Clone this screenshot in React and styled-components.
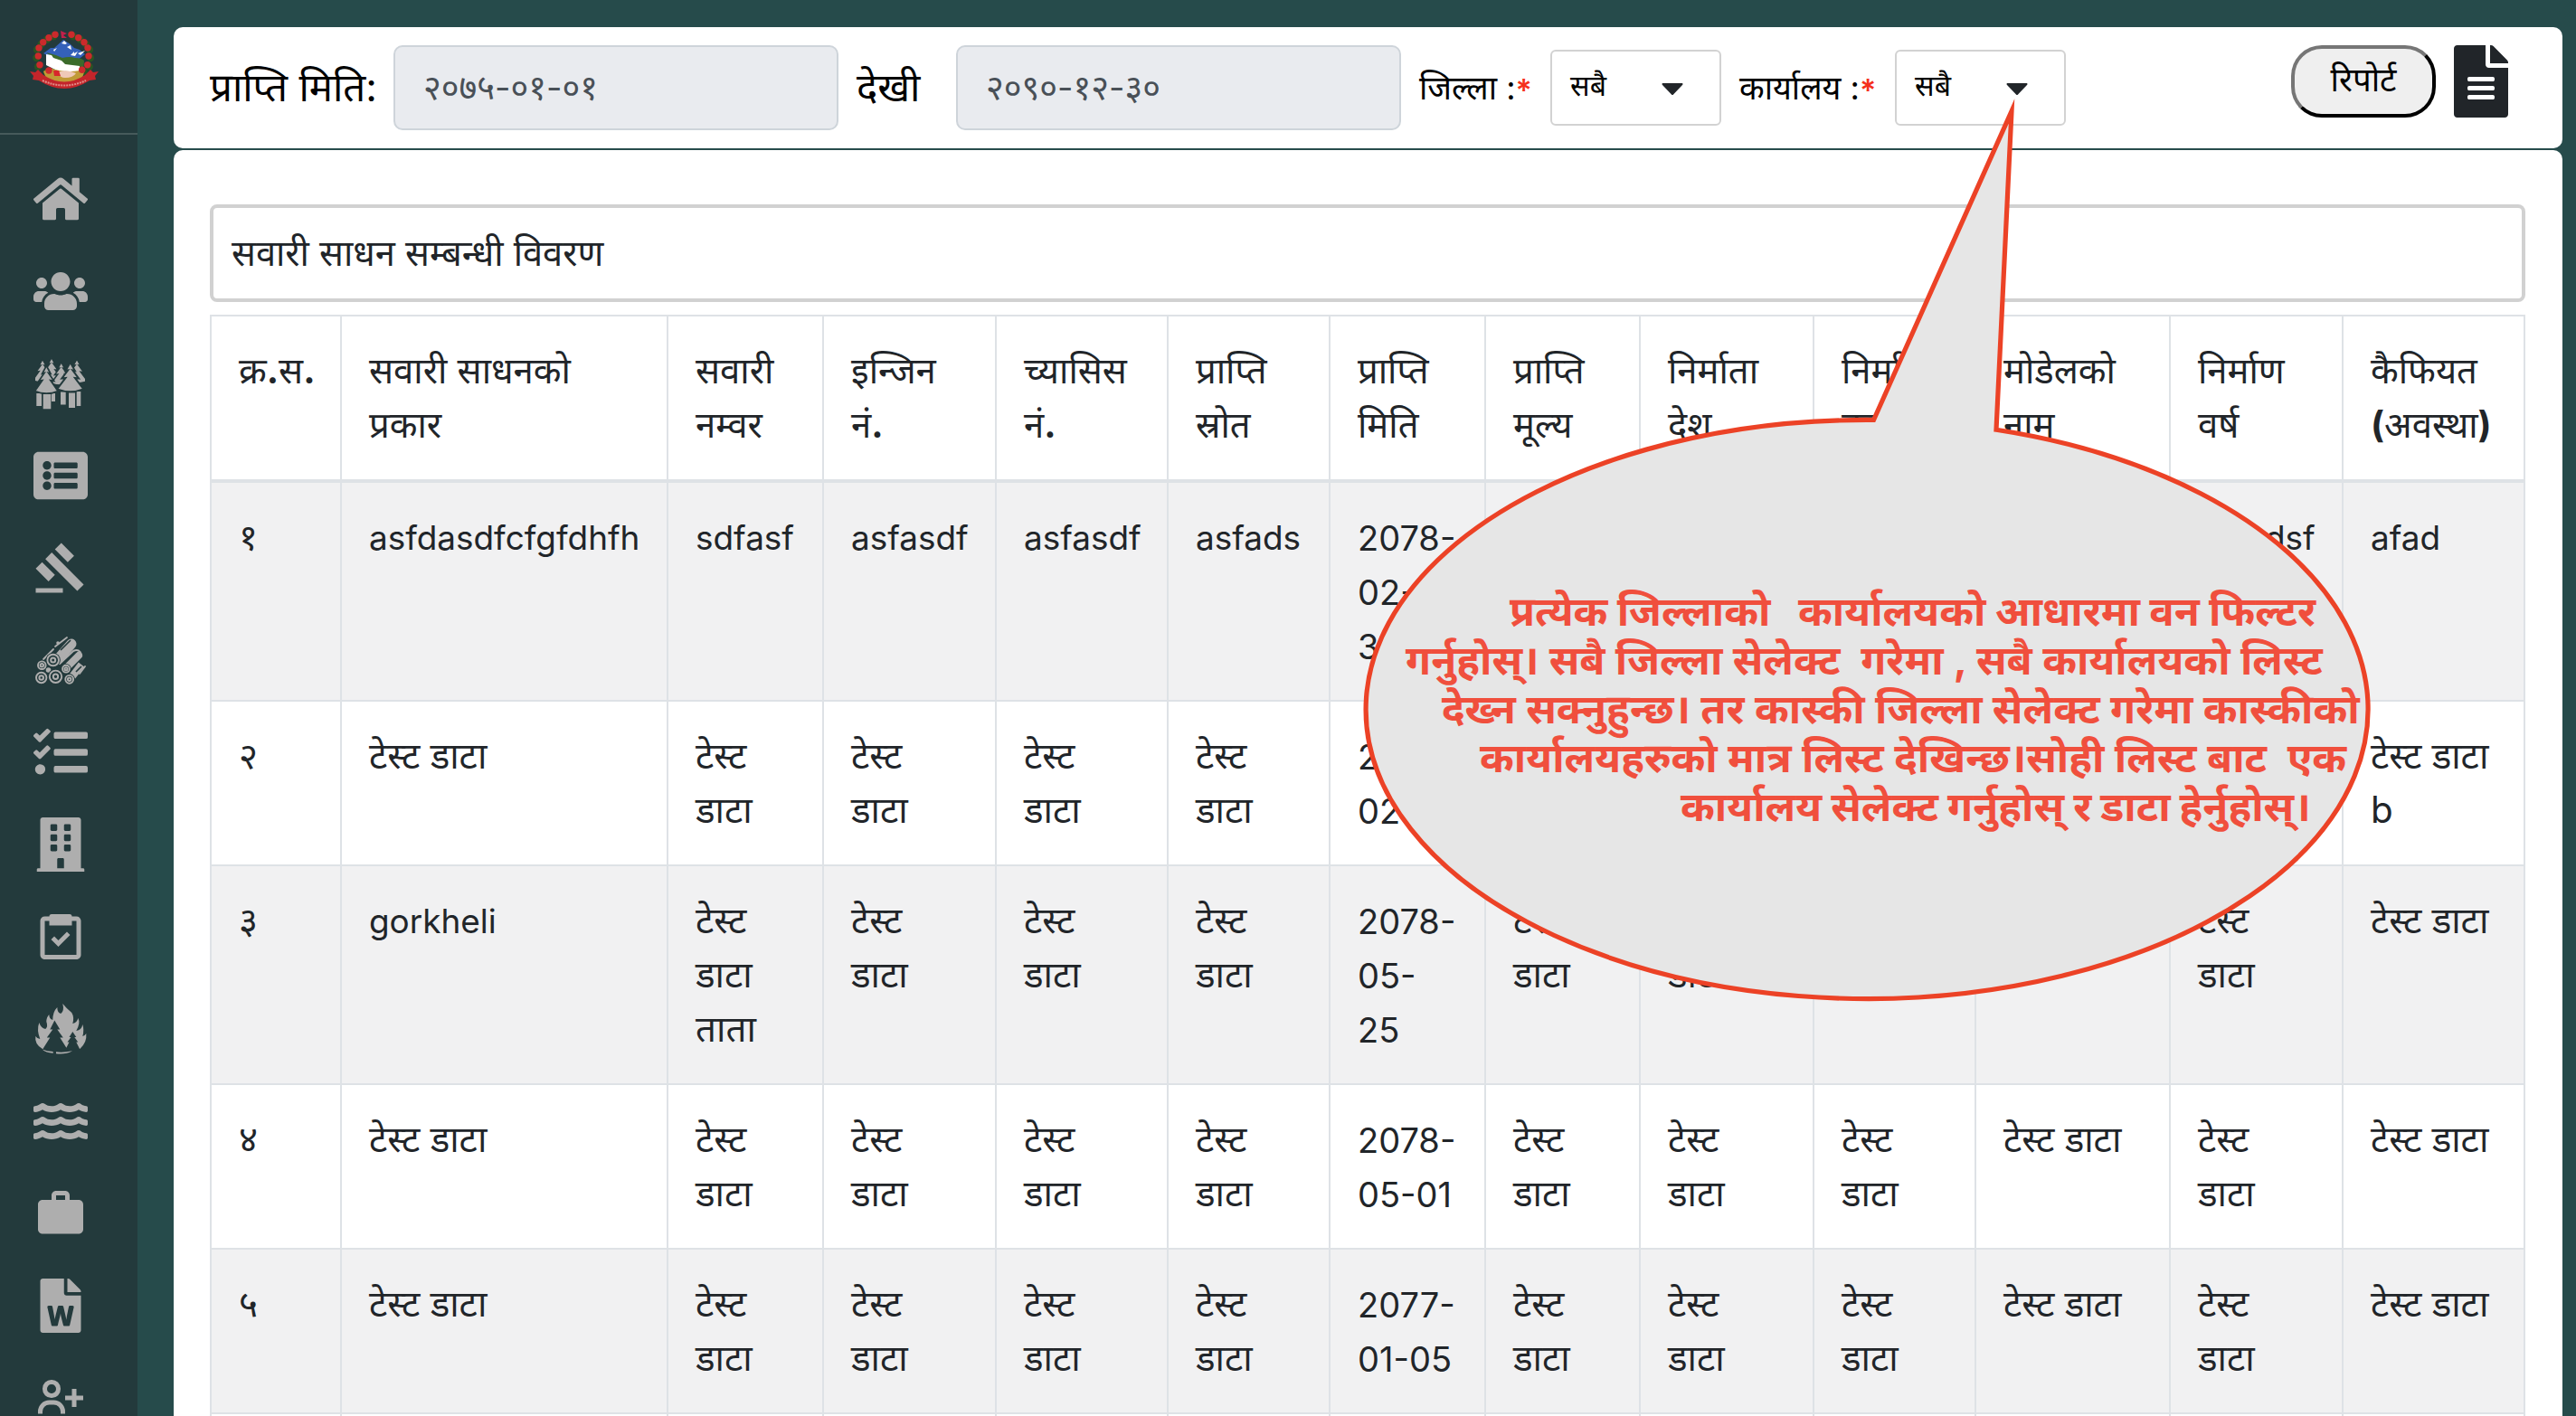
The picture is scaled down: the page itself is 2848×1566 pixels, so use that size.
import React from "react";
import styled, { createGlobalStyle } from "styled-components";
import { FaHome, FaUsers, FaListAlt, FaTasks, FaBuilding, FaWater, FaFileWord, FaFileAlt } from "react-icons/fa";
import { MdGavel } from "react-icons/md";
import { BiUserPlus } from "react-icons/bi";

const Global = createGlobalStyle`
  *{box-sizing:border-box}
  body{margin:0;background:#264b4b;overflow:hidden;font-family:Inter,"Noto Sans Devanagari","Noto Sans",sans-serif;color:#212529}
`;
const Page = styled.div`display:flex;height:1566px;width:2848px;overflow:hidden;position:relative;background:#264b4b;`;
const Sidebar = styled.nav`width:152px;height:100%;background:#233a3c;flex:none;overflow:hidden;`;
const Brand = styled.div`height:149px;border-bottom:2px solid #465a5b;padding:33px 0 0 33px;margin-bottom:20px;`;
const NavItem = styled.div`height:102px;padding-left:37px;display:flex;align-items:center;color:#aeaeae;svg{width:60px;height:60px;display:block}`;
const Main = styled.main`flex:1;padding:30px 16px 0 40px;display:flex;flex-direction:column;gap:2px;`;
const Toolbar = styled.header`height:134px;flex:none;background:#fff;border-radius:10px;padding:20px 60px 0 40px;display:flex;align-items:flex-start;`;
const Cell = styled.div`width:${p => p.$w}px;height:94px;padding-left:${p => p.$pad || 0}px;padding-top:5px;flex:none;display:flex;align-items:center;white-space:pre;color:#000;font-size:${p => p.$size}px;`;
const Star = styled.span`color:#f5301c;font-weight:600;font-size:34px;`;
const DateBox = styled.div`width:492px;height:94px;flex:none;border:2px solid #ced4da;border-radius:10px;background:#e9ebef;color:#495057;padding:4px 0 0 31px;display:flex;align-items:center;font-size:38px;`;
const Select = styled.div`width:189px;height:84px;margin-top:5px;flex:none;border:2px solid #d2d2d2;border-radius:6px;padding:0 40px 0 20px;display:flex;align-items:center;justify-content:space-between;color:#000;font-size:32px;svg{width:24px;height:13px;display:block;margin-top:2px}`;
const Actions = styled.div`margin-left:auto;display:flex;gap:20px;color:#212529;svg{width:60px;height:80px;display:block}`;
const Report = styled.button`width:160px;height:80px;padding:2px 0 0;border:4px outset #000;border-color:#767676 #212121 #212121 #767676;border-radius:34px;background:#efefef;color:#000;font:inherit;font-size:36.5px;`;
const Panel = styled.section`flex:1;min-height:0;overflow:hidden;background:#fff;border-radius:10px 10px 0 0;padding:60px 41px 0 40px;`;
const Title = styled.div`height:108px;border:4px solid #d1d1d1;border-radius:8px;display:flex;align-items:center;padding:5px 0 0 20px;font-size:39.8px;margin-bottom:14px;`;
const Table = styled.table`border-collapse:collapse;table-layout:fixed;width:2559px;font-size:40px;line-height:60px;`;
const Th = styled.th`border:2px solid #dee2e6;border-bottom-width:4px;padding:30px 0 30px 30px;text-align:left;vertical-align:top;font-weight:400;white-space:pre;b{font-weight:700}`;
const Row = styled.tr`background:${p => (p.$odd ? "#f1f1f2" : "#fff")};`;
const Td = styled.td`border:2px solid #dee2e6;padding:${p => (p.$kind === "nepali" ? "30px 0 30px 30px" : "31px 0 29px 30px")};vertical-align:top;white-space:pre;font-size:${p => (p.$kind === "word" ? 36.9 : p.$kind === "date" ? 38 : 40.3)}px;`;
const Callout = styled.div`position:absolute;left:1499px;top:100px;width:1130px;height:1020px;`;
const Bubble = styled.svg`position:absolute;inset:0;width:1130px;height:1020px;`;
const Note = styled.div`position:absolute;left:1px;top:549px;width:1130px;height:271px;overflow:hidden;color:#f04f3d;font-weight:700;font-size:45.6px;line-height:54px;`;
const NoteLine = styled.div`white-space:pre;height:54px;padding-left:${p => p.$x}px;word-spacing:${p => p.$ws}px;`;

const petals = [[28,5.3],[21,8.7],[14.7,13.7],[10,20],[9.3,29],[11,38.7],[21,45],[46,5.3],[53.7,8.7],[60,13.7],[64,20],[65,29],[63.7,38.7],[57.7,44.3]];
const Logo = () => (
  <svg width="77" height="67" viewBox="0 0 77 67">
    {petals.map(([x, y], i) => <circle key={i} cx={x + (x < 38 ? -2 : 2)} cy={y + 2} r="4.2" fill="#2a5423" />)}
    <path d="M15 26l8-6 4 0 10-9 8 5 4 4 6 2 6 5-9 7-24-1z" fill="#3461ba" />
    <path d="M35 15l3-3 3 3-2 1zM26 22l4-2-3 4zM41 19l4-2 1 5-2-1zM45 28l4-4 0 2 4-2-3 5zM53 26l8-3-5 5z" fill="#fff" />
    <path d="M18 25q9 2 18 6 8-2 14 0 7 0 10 3l-1 12-20-5z" fill="#3b6b2b" />
    <path d="M18 27l6 1 2 3 9 3 4 4 16 2 1 7-12 1-14-3-12-6z" fill="#fff" />
    <path d="M15 46l7-4q16 6 33 3l5 2-3 9q-20 7-38 0z" fill="#c09a36" />
    <path d="M31 47q9-4 20 1-3 5-12 5-6 0-8-6z" fill="#efc9b8" />
    <path d="M26 45h6l2 6h-7z" fill="#d8262c" />
    {petals.map(([x, y], i) => <circle key={i} cx={x} cy={y} r="3.700" fill="#cc2a2c" />)}
    <path d="M34 1l7 3-4 2 4 3h-6z" fill="#c2204a" />
    <path d="M0 46l6 1 3-3 6 6q23 15 46 0l6-6 3 3 6-1-4 5 1 4-7 1q-28 18-56 0l-7-1 1-4z" fill="#c3252b" />
    <path d="M14 56q24 11 48 0" stroke="#e08b86" strokeWidth="2" strokeDasharray="2 1" fill="none" />
  </svg>
);
const Crown = ({ x, y, sx, sy }) => (
  <path
    transform={`translate(${x} ${y}) scale(${sx} ${sy})`}
    d="M0 0l5 8-2.500-.5 6.500 8-4-.5 9 11q-14 5-28 0l9-11-4 .5 6.500-8-2.500.5z"
    stroke="#233a3c"
    strokeWidth="1.800"
  />
);
const Forest = () => (
  <svg viewBox="0 0 60 60" fill="currentColor">
    <clipPath id="grove"><path d="M2 0h55v60H2z" /></clipPath>
    <g clipPath="url(#grove)">
      <Crown x={10} y={3.4} sx={0.8} sy={0.9} />
      <Crown x={20} y={1.5} sx={0.8} sy={0.9} />
      <Crown x={30.7} y={6.500} sx={0.8} sy={0.9} />
      <Crown x={48} y={3} sx={0.85} sy={0.95} />
      <path d="M3.300 41H9v14H3.300zM20 41h4v9h-4zM30 39.500h5.700v14H30zM47.700 39h4.600v16h-4.600z" />
      <Crown x={14.300} y={10.500} sx={0.92} sy={1.080} />
      <Crown x={40.700} y={7} sx={1.040} sy={1.130} />
      <path d="M10.700 42h8.600v16.300h-8.600zM39 40.500h7V57h-7z" />
    </g>
  </svg>
);
const Ring = ({ x, y, r }) => (
  <g>
    <circle cx={x} cy={y} r={r + 1.8} fill="#233a3c" />
    <circle cx={x} cy={y} r={r} fill="none" stroke="currentColor" strokeWidth="1.900" />
    <circle cx={x} cy={y} r={r * 0.4} fill="none" stroke="currentColor" strokeWidth="2" />
  </g>
);
const Logs = () => (
  <svg viewBox="0 0 60 60">
    <g stroke="currentColor" fill="none" strokeLinecap="round">
      <path d="M27 29L42 12" strokeWidth="11" />
      <path d="M11 29l11-11M24 15l13-10" strokeWidth="1.800" />
      <path d="M38 37l12-12" strokeWidth="8" />
      <path d="M29 34l15-14q7-3 9 4" strokeWidth="2" />
      <path d="M43 48l10-13" strokeWidth="8" strokeLinecap="butt" />
      <path d="M51 45l6-8" strokeWidth="1.800" />
    </g>
    <path d="M30 19L41 8M47 43l6-6" stroke="#233a3c" strokeWidth="1.700" />
    <circle cx="27" cy="11" r="1.800" fill="currentColor" />
    <circle cx="16.500" cy="41" r="2.800" fill="currentColor" />
    <Ring x={9.3} y={35.7} r={4.3} />
    <Ring x={21.7} y={30} r={6.3} />
    <Ring x={36} y={39.7} r={3.900} />
    <Ring x={8.7} y={49.500} r={5.700} />
    <Ring x={24.5} y={48.3} r={6.700} />
    <Ring x={39.7} y={51.3} r={4.4} />
  </svg>
);
const FireForest = () => (
  <svg viewBox="0 0 60 60" fill="currentColor">
    <path d="M10 52Q1 47 2.300 38q2 3 5 3-4-10-1-18 2 6 7 7 3-3 1-8 0-5 3-8 0 5 4 6 0-9 5-14 0 6 4 7 4-3 2-11 4 5 10 10 3 5 1 12 5-1 6-6 3 5-2 14 6-1 7-7 2 6 0 13 2 0 4-3 1 10-7 17z" />
    <path d="M23.300 20.500l6 10h-3l6.500 9h-3.500l8.500 13.500q-14 4-28 0l8.500-13.500h-3.500l6.500-9h-3zM43.300 33l4 6h-2l4 5.500h-2l4 8H35.500l4-8h-2l4-5.500h-2z" fill="#233a3c" />
    <path d="M9.700 52.500q5 2 12 2.500v1.700q-8-.5-12-4.200zM25 55.300q8 1 18-1-7 4-18 3z" />
  </svg>
);
const Clipboard = () => (
  <svg viewBox="0 0 24 24" fill="currentColor">
    <path d="M5 22h14c1.1 0 2-.9 2-2V5c0-1.1-.9-2-2-2h-2a1 1 0 0 0-1-1H8a1 1 0 0 0-1 1H5c-1.100 0-2 .9-2 2v15c0 1.100.9 2 2 2zM5 5h2v2h10V5h2v15H5z" />
    <path d="M11 13.586l-1.793-1.793-1.414 1.414L11 16.414l5.207-5.207-1.414-1.414z" />
  </svg>
);
const Briefcase = () => (
  <svg viewBox="0 0 24 24" fill="currentColor">
    <path fillRule="evenodd" d="M20 6h-4V4c0-1.100-.9-2-2-2h-4c-1.100 0-2 .9-2 2v2H4c-1.100 0-2 .9-2 2v11c0 1.100.9 2 2 2h16c1.100 0 2-.9 2-2V8c0-1.100-.9-2-2-2zM10 4h4v2h-4z" />
  </svg>
);
const Caret = () => <svg viewBox="0 0 24 13"><path d="M1 0h22q1 1 0 2L13 12.500q-1 1-2 0L1 2q-1-1 0-2z" fill="#212529" /></svg>;

const nav = [FaHome, FaUsers, Forest, FaListAlt, MdGavel, Logs, FaTasks, FaBuilding, Clipboard, FireForest, FaWater, Briefcase, FaFileWord, BiUserPlus];
const widths = [144, 361, 172, 191, 190, 179, 172, 171, 192, 179, 215, 191, 201];
const T = "टेस्ट\nडाटा";
const D = "टेस्ट डाटा";
const rows = [
  ["१", "asfdasdfcfgfdhfh", "sdfasf", "asfasdf", "asfasdf", "asfads", "2078-\n02-\n30", "asfd", "asfasdf", "asfasdf", "asfasdf", "asfadsf", "afad"],
  ["२", D, T, T, T, T, "2078-\n02-01", T, T, T, D, T, D + "\nb"],
  ["३", "gorkheli", T + "\nताता", T, T, T, "2078-\n05-\n25", T, T, T, D, T, D],
  ["४", D, T, T, T, T, "2078-\n05-01", T, T, T, D, T, D],
  ["५", D, T, T, T, T, "2077-\n01-05", T, T, T, D, T, D],
  Array(13).fill(""),
];
const kindOf = text => (/^\d/.test(text) ? "date" : /^[a-z]/.test(text) ? "word" : "nepali");

export default function App() {
  return (
    <Page>
      <Global />
      <Sidebar>
        <Brand><Logo /></Brand>
        {nav.map((Icon, i) => <NavItem key={i}><Icon /></NavItem>)}
      </Sidebar>
      <Main>
        <Toolbar>
          <Cell $w={203} $size={43.8}>प्राप्ति मिति:</Cell>
          <DateBox>२०७५-०१-०१</DateBox>
          <Cell $w={130} $pad={20} $size={43.8}>देखी</Cell>
          <DateBox>२०९०-१२-३०</DateBox>
          <Cell $w={165} $pad={20} $size={36}>जिल्ला :<Star>*</Star></Cell>
          <Select>सबै<Caret /></Select>
          <Cell $w={192} $pad={20} $size={36}>कार्यालय :<Star>*</Star></Cell>
          <Select>सबै<Caret /></Select>
          <Actions><Report>रिपोर्ट</Report><FaFileAlt /></Actions>
        </Toolbar>
        <Panel>
          <Title>सवारी साधन सम्बन्धी विवरण</Title>
          <Table>
            <colgroup>{widths.map((w, i) => <col key={i} style={{ width: w }} />)}</colgroup>
            <thead>
              <tr>
                <Th>क्र<b>.</b>स<b>.</b></Th>
                <Th>{"सवारी साधनको\nप्रकार"}</Th>
                <Th>{"सवारी\nनम्वर"}</Th>
                <Th>{"इन्जिन\nनं"}<b>.</b></Th>
                <Th>{"च्यासिस\nनं"}<b>.</b></Th>
                <Th>{"प्राप्ति\nस्रोत"}</Th>
                <Th>{"प्राप्ति\nमिति"}</Th>
                <Th>{"प्राप्ति\nमूल्य"}</Th>
                <Th>{"निर्माता\nदेश"}</Th>
                <Th>{"निर्माता\nकम्पनी"}</Th>
                <Th>{"मोडेलको\nनाम"}</Th>
                <Th>{"निर्माण\nवर्ष"}</Th>
                <Th>{"कैफियत\n"}<b>(</b>अवस्था<b>)</b></Th>
              </tr>
            </thead>
            <tbody>
              {rows.map((r, i) => <Row key={i} $odd={i % 2 === 0}>{r.map((c, j) => <Td key={j} $kind={kindOf(c)}>{c}</Td>)}</Row>)}
            </tbody>
          </Table>
        </Panel>
      </Main>
      <Callout>
        <Bubble viewBox="1500 100 1130 1020">
          <path d="M2072.500 464.500L2225 123L2208 475.300A554 320 0 1 1 2072.500 464.500z" fill="#e6e6e6" stroke="#ec4226" strokeWidth="5.200" strokeMiterlimit="20" />
        </Bubble>
        <Note>
          <NoteLine $x={169} $ws={-0.6}>प्रत्येक जिल्लाको   कार्यालयको आधारमा वन फिल्टर</NoteLine>
          <NoteLine $x={54} $ws={0.5}>गर्नुहोस्। सबै जिल्ला सेलेक्ट  गरेमा , सबै कार्यालयको लिस्ट</NoteLine>
          <NoteLine $x={94} $ws={0.5}>देख्न सक्नुहुन्छ। तर कास्की जिल्ला सेलेक्ट गरेमा कास्कीको</NoteLine>
          <NoteLine $x={136} $ws={0.5}>कार्यालयहरुको मात्र लिस्ट देखिन्छ।सोही लिस्ट बाट  एक</NoteLine>
          <NoteLine $x={358} $ws={-0.8}>कार्यालय सेलेक्ट गर्नुहोस् र डाटा हेर्नुहोस्।</NoteLine>
        </Note>
      </Callout>
    </Page>
  );
}
